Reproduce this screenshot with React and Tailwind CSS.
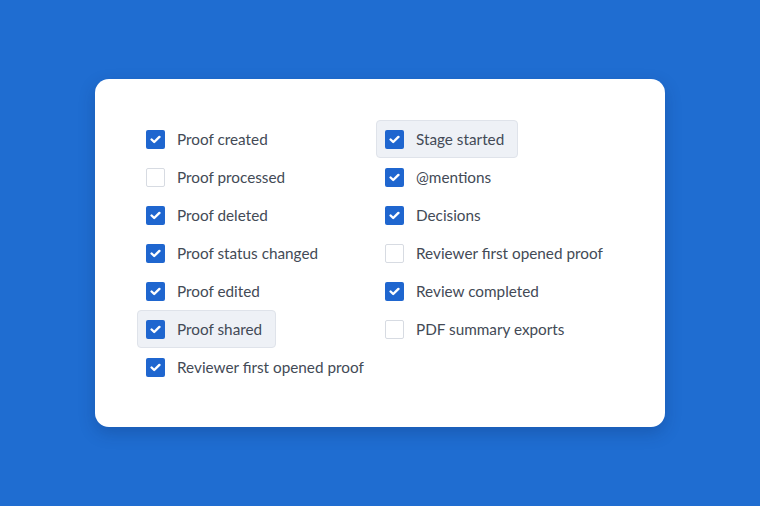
import React from 'react';

const LEFT = [
  { label: 'Proof created', checked: true },
  { label: 'Proof processed', checked: false },
  { label: 'Proof deleted', checked: true },
  { label: 'Proof status changed', checked: true },
  { label: 'Proof edited', checked: true },
  { label: 'Proof shared', checked: true, active: true },
  { label: 'Reviewer first opened proof', checked: true },
];

const RIGHT = [
  { label: 'Stage started', checked: true, active: true },
  { label: '@mentions', checked: true },
  { label: 'Decisions', checked: true },
  { label: 'Reviewer first opened proof', checked: false },
  { label: 'Review completed', checked: true },
  { label: 'PDF summary exports', checked: false },
];

function Option({ label, checked, active }) {
  return (
    <div
      className={`flex h-[38px] items-center gap-3 self-start whitespace-nowrap rounded-[4px] border px-[8px] ${
        active ? 'border-[#dfe3ea] bg-[#eef1f6]' : 'border-transparent'
      }`}
    >
      {checked ? (
        <span className="flex h-[19px] w-[19px] shrink-0 items-center justify-center rounded-[2px] bg-[#1f66cf]">
          <svg width="11" height="9" viewBox="0 0 11 9" fill="none">
            <path d="M1.6 4.5 4.2 7 9.4 1.9" stroke="white" strokeWidth="2.4" strokeLinecap="round" strokeLinejoin="round" />
          </svg>
        </span>
      ) : (
        <span className="h-[19px] w-[19px] shrink-0 rounded-[2px] border border-[#d7dbe2] bg-white" />
      )}
      <span className="pr-[5px] text-[15.3px] text-[#434a56]">{label}</span>
    </div>
  );
}

export default function App() {
  return (
    <div
      className="flex h-[506px] w-[760px] items-start justify-center bg-[#1f6dd1] pt-[79px]"
      style={{ fontFamily: '"Lato", "Open Sans", sans-serif' }}
    >
      <div className="flex h-[348px] w-[570px] rounded-[14px] bg-white pl-[42px] pt-[41px] shadow-[0_6px_16px_rgba(10,40,90,0.25)]">
        <div className="flex w-[239px] shrink-0 flex-col">
          {LEFT.map((o, i) => (
            <Option key={i} {...o} />
          ))}
        </div>
        <div className="flex flex-col">
          {RIGHT.map((o, i) => (
            <Option key={i} {...o} />
          ))}
        </div>
      </div>
    </div>
  );
}
